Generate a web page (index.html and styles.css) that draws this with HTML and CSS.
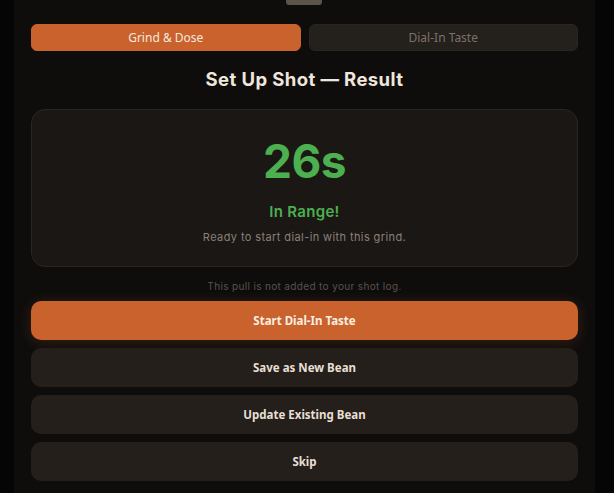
FILE: index.html
```html
<!DOCTYPE html>
<html>
<head>
<meta charset="utf-8">
<link rel="stylesheet" href="styles.css">
</head>
<body>
<div class="sheet">
  <div class="handle"></div>
  <div class="tabs">
    <div class="tab tab-active">Grind &amp; Dose</div>
    <div class="tab">Dial-In Taste</div>
  </div>
  <h1 class="title">Set Up Shot — Result</h1>
  <div class="card">
    <div class="time">26s</div>
    <div class="status">In Range!</div>
    <div class="desc">Ready to start dial-in with this grind.</div>
  </div>
  <p class="note">This pull is not added to your shot log.</p>
  <div class="actions">
    <button class="btn btn-primary">Start Dial-In Taste</button>
    <button class="btn">Save as New Bean</button>
    <button class="btn">Update Existing Bean</button>
    <button class="btn">Skip</button>
  </div>
</div>
</body>
</html>
```
FILE: styles.css
```css
html, body {
  margin: 0;
  padding: 0;
  height: 100%;
  background: #050505;
  overflow: hidden;
}
.sheet {
  margin-left: 14px;
  width: 581px;
  height: 100%;
  box-sizing: border-box;
  background: #0e0d0c;
  padding: 0 17px;
  display: flex;
  flex-direction: column;
  font-family: "Inter", "Noto Sans", sans-serif;
}
.handle {
  align-self: center;
  width: 36px;
  height: 5px;
  margin-left: -1px;
  background: #5c534b;
  border-radius: 0 0 3px 3px;
  margin-bottom: 19px;
}
.tabs {
  display: flex;
  gap: 8px;
}
.tab {
  flex: 1;
  height: 27px;
  box-sizing: border-box;
  border-radius: 6px;
  background: #24201c;
  border: 1px solid #2a2521;
  color: #7c7168;
  font-family: "Noto Sans", sans-serif;
  font-size: 12px;
  display: flex;
  align-items: center;
  justify-content: center;
}
.tab-active {
  background: #c9622d;
  border-color: #c9622d;
  color: #f6e9dd;
}
.title {
  margin: 16px 0 18px;
  text-align: center;
  font-size: 18.5px;
  font-weight: 700;
  color: #efe6dc;
  line-height: 24px;
  letter-spacing: 0.4px;
}
.card {
  background: #1b1714;
  border: 1px solid #2a2521;
  border-radius: 14px;
  height: 158px;
  box-sizing: border-box;
  display: flex;
  flex-direction: column;
  align-items: center;
  padding-top: 23px;
}
.time {
  font-size: 46px;
  font-weight: 700;
  color: #4caf50;
  line-height: 56px;
  letter-spacing: -0.5px;
}
.status {
  margin-top: 14px;
  font-size: 15px;
  font-weight: 600;
  color: #4caf50;
  line-height: 18px;
  letter-spacing: 0.3px;
}
.desc {
  margin-top: 9px;
  font-size: 11px;
  color: #8a8078;
  line-height: 14px;
  letter-spacing: 0.4px;
}
.note {
  margin: 12px 0 8px;
  text-align: center;
  font-size: 10px;
  color: #5a524b;
  line-height: 14px;
  letter-spacing: 0.35px;
}
.actions {
  display: flex;
  flex-direction: column;
  gap: 8px;
}
.btn {
  height: 39px;
  border: none;
  border-radius: 10px;
  background: #241f1b;
  color: #e8dfd4;
  font-family: "Noto Sans", sans-serif;
  font-size: 11.5px;
  font-weight: 700;
  padding: 0;
}
.btn-primary {
  background: #c9622d;
  color: #fbeee2;
  box-shadow: 0 2px 14px rgba(201, 98, 45, 0.22);
}
```
